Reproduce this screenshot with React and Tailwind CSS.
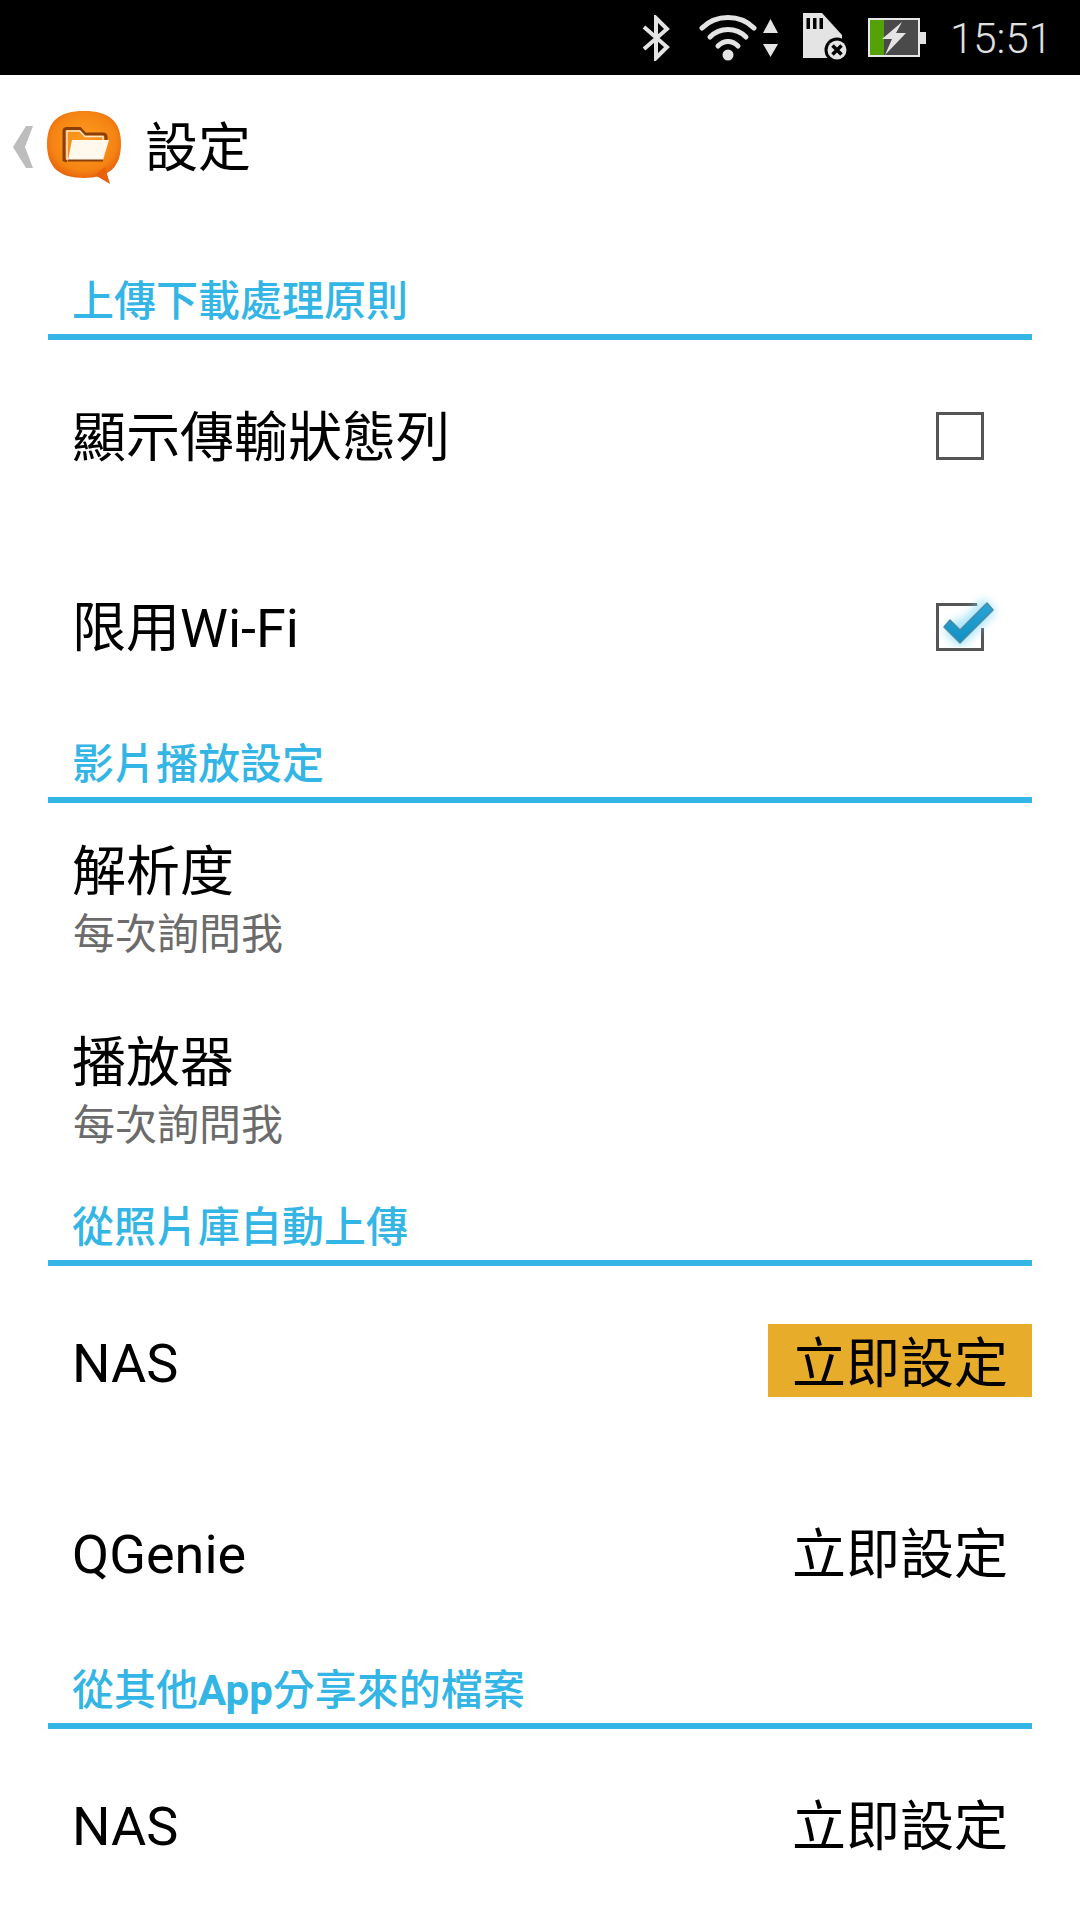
const CJK = "font-['Roboto','Noto_Sans_CJK_TC','Noto_Sans_CJK_JP',sans-serif]";

function StatusBar() {
  return (
    <div className="h-[75px] bg-black flex items-center justify-end pr-[28px]">
      <svg width="28" height="46" viewBox="0 0 28 46" className="mr-[29px]" fill="none" stroke="#e4e4e4" strokeWidth="4">
        <path d="M2 12 L25 32 L14 43 V3 L25 14 L2 34" />
      </svg>
      <svg width="58" height="47" viewBox="0 0 58 47" className="mr-[6px]" fill="none" stroke="#e4e4e4" strokeWidth="5" strokeLinecap="round">
        <path d="M3 14 C17 0 41 0 55 14" />
        <path d="M11 23 C21 13 37 13 47 23" />
        <path d="M19 32 C25 26 33 26 39 32" />
        <circle cx="29" cy="41" r="5.500" fill="#e4e4e4" stroke="none" />
      </svg>
      <svg width="15" height="38" viewBox="0 0 15 38" className="mr-[25px]" fill="#e4e4e4">
        <path d="M7.500 0 L15 14 H0 Z" />
        <path d="M7.500 38 L15 25 H0 Z" />
      </svg>
      <svg width="48" height="50" viewBox="0 0 48 50" className="mr-[17px]">
        <path d="M0 0 H19 L39 22 V45 H0 Z" fill="#e4e4e4" />
        <rect x="3.500" y="5" width="3.500" height="11" fill="#000" />
        <rect x="10" y="5" width="3.500" height="11" fill="#000" />
        <rect x="16.500" y="5" width="3.500" height="11" fill="#000" />
        <circle cx="34" cy="37" r="12.500" fill="#000" />
        <circle cx="34" cy="37" r="9.500" fill="#e4e4e4" />
        <path d="M29.500 32.500 L38.500 41.500 M38.500 32.500 L29.500 41.500" stroke="#000" strokeWidth="3.500" />
      </svg>
      <svg width="58" height="39" viewBox="0 0 58 39" className="mr-[24px]">
        <rect x="1" y="1" width="50" height="37" fill="#4a4a4a" stroke="#e8e8e8" strokeWidth="2" />
        <rect x="2" y="2" width="14" height="35" fill="#55a208" />
        <rect x="52" y="14" width="6" height="12" fill="#e4e4e4" />
        <path d="M34 4 L14 21 H24 L17 37 L38 15 H28 Z" fill="#e4e4e4" />
      </svg>
      <span className="font-['Roboto',sans-serif] text-[42px] leading-none font-light text-[#e0e0e0] mt-[3px]">15:51</span>
    </div>
  );
}

function AppBar() {
  return (
    <div className="h-[144px] flex items-center">
      <svg width="20" height="42" viewBox="0 0 20 42" className="ml-[13px] mr-[14px]" fill="#bdbdbd">
        <path d="M20 0 H13 L0 21 L13 42 H20 L12 21 Z" />
      </svg>
      <svg width="74" height="74" viewBox="0 0 74 74" className="mr-[24px] mt-[1px]">
        <defs>
          <radialGradient id="org" cx="0.5" cy="0.45" r="0.62">
            <stop offset="0" stopColor="#ff9d1f" />
            <stop offset="0.7" stopColor="#f58413" />
            <stop offset="1" stopColor="#e2590a" />
          </radialGradient>
        </defs>
        <path d="M37 0 C62 0 74 10 74 33 C74 56 62 67 37 67 C12 67 0 56 0 33 C0 10 12 0 37 0 Z" fill="url(#org)" />
        <path d="M48 64 L63 73 L58 56 Z" fill="#e8600c" />
        <path d="M20 50 L17 49 V20 C17 18.500 18 17.500 20 17.500 H33 L38 23 H56 C58 23 59 24 59 26 V29" fill="none" stroke="#8a3e08" strokeWidth="3" />
        <path d="M20 49 V20 H33 L38 25.500 H56 V29" fill="none" stroke="#fde7c9" strokeWidth="1.500" />
        <path d="M25 29 H62 L56 49 H21 Z" fill="#fff8ec" />
        <path d="M21 49.500 H56" stroke="#8a3e08" strokeWidth="2" />
      </svg>
      <span className={`${CJK} text-[53px] leading-none text-black pt-[5px]`}>設定</span>
    </div>
  );
}

function SectionHeader({ children }) {
  return (
    <div className="h-[81px] mx-[48px] flex flex-col justify-end">
      <div className={`${CJK} pl-[24px] text-[42px] leading-none font-medium text-[#33b5e5] pb-[11px]`}>{children}</div>
      <div className="h-[6px] bg-[#33b5e5]" />
    </div>
  );
}

function Check({ on }) {
  return (
    <div className="relative w-[48px] h-[48px] border-[3px] border-[#555555] mr-[96px]">
      {on && (
        <svg width="72" height="64" viewBox="0 0 72 64" className="absolute left-[-3px] top-[-15px]">
          <defs>
            <filter id="gl" x="-40%" y="-40%" width="180%" height="180%">
              <feGaussianBlur stdDeviation="5" />
            </filter>
            <linearGradient id="ck" x1="0" y1="0" x2="0" y2="1">
              <stop offset="0" stopColor="#2aa6d6" />
              <stop offset="1" stopColor="#0f8fc2" />
            </linearGradient>
          </defs>
          <path d="M41 12 H52 V37 H44 Z" fill="#ffffff" />
          <path d="M14 34 L24 44 L54 14" fill="none" stroke="#8fdcf6" strokeWidth="18" filter="url(#gl)" opacity="0.8" />
          <path d="M8 36 L14 29 L24 39 L51 12 L57 19 L24 52 Z" fill="url(#ck)" stroke="#4a8aa4" strokeWidth="1.500" strokeLinejoin="round" />
        </svg>
      )}
    </div>
  );
}

function Label({ children, cjk }) {
  return <span className={`${CJK} text-[54px] leading-none text-black ${cjk ? "pt-[6px]" : "pt-[4px]"}`}>{children}</span>;
}

function ToggleRow({ label, on }) {
  return (
    <div className="h-[191px] flex items-center justify-between pl-[72px]">
      <Label cjk={!on}>{label}</Label>
      <Check on={on} />
    </div>
  );
}

function InfoRow({ label }) {
  return (
    <div className="h-[191px] flex flex-col justify-center pl-[72px] pt-[4px]">
      <span className={`${CJK} text-[54px] leading-none text-black`}>{label}</span>
      <span className={`${CJK} text-[42px] leading-none text-[#6b6b6b] mt-[14px] ml-[1px]`}>每次詢問我</span>
    </div>
  );
}

function ActionRow({ label, active }) {
  return (
    <div className="h-[191px] flex items-center justify-between pl-[72px] pr-[48px]">
      <Label>{label}</Label>
      <span className={`${CJK} w-[264px] h-[73px] mb-[2px] flex items-center justify-center text-[54px] leading-none text-black ${active ? "bg-[#e8ac2b]" : ""}`}>
        <span className="pt-[8px]">立即設定</span>
      </span>
    </div>
  );
}

export default function App() {
  return (
    <div className="w-[1080px] h-[1920px] bg-white overflow-hidden">
      <StatusBar />
      <AppBar />
      <div className="h-[40px]" />
      <SectionHeader>上傳下載處理原則</SectionHeader>
      <ToggleRow label="顯示傳輸狀態列" />
      <ToggleRow label="限用Wi-Fi" on />
      <SectionHeader>影片播放設定</SectionHeader>
      <InfoRow label="解析度" />
      <InfoRow label="播放器" />
      <SectionHeader>從照片庫自動上傳</SectionHeader>
      <ActionRow label="NAS" active />
      <ActionRow label="QGenie" />
      <SectionHeader>從其他<span className="font-bold">App</span>分享來的檔案</SectionHeader>
      <ActionRow label="NAS" />
    </div>
  );
}
